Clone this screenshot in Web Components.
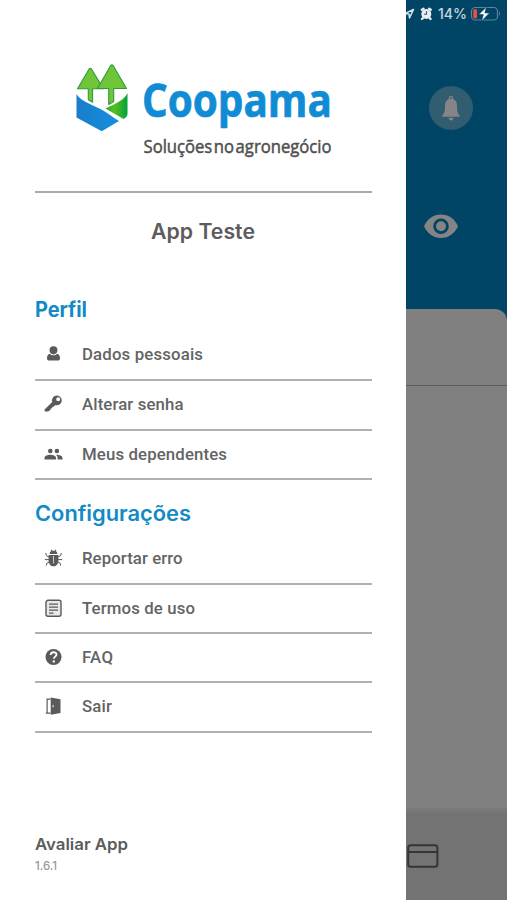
<!DOCTYPE html>
<html lang="pt-BR">
<head>
<meta charset="utf-8">
<title>Coopama</title>
<style>
body{margin:0;width:507px;height:900px;overflow:hidden;background:#fff;font-family:Roboto,"Liberation Sans",sans-serif}
</style>
</head>
<body>
<app-screen></app-screen>
<script>
const define=(name,html)=>{
  const t=document.createElement('template');
  t.innerHTML=html;
  customElements.define(name,class extends HTMLElement{
    constructor(){super();this.attachShadow({mode:'open'}).append(t.content.cloneNode(true));}
  });
};

/* Text set to an exact line length; w = length, size = font size, base = baseline */
customElements.define('fit-text',class extends HTMLElement{
  connectedCallback(){
    if(this.shadowRoot)return;
    const a=n=>this.getAttribute(n);
    const root=this.attachShadow({mode:'open'});
    root.innerHTML=`<style>:host{display:block}svg{display:block;overflow:visible}</style>
    <svg width="${a('w')}" height="${a('box')}"><text x="0" y="${a('base')}" textLength="${a('w')}" lengthAdjust="${a('adjust')||'spacingAndGlyphs'}"
     font-family="${a('face')||'Inter'}, 'Liberation Sans', sans-serif" font-size="${a('size')}" font-weight="${a('weight')||600}" fill="${a('ink')}"></text></svg>`;
    root.querySelector('text').textContent=a('label');
  }
});

const icons={
person:'<path d="M9.500 1.200a4 4 0 0 1 4 4c0 2.300-1.800 4.200-4 4.200s-4-1.900-4-4.200a4 4 0 0 1 4-4zM5.900 8.700c2 2 5.200 2 7.200 0 2 .3 2.900 2 2.900 4.500 0 1.700-.8 2.300-2.200 2.300H5.200C3.800 15.500 3 14.900 3 13.200c0-2.500.9-4.200 2.900-4.500z"/>',
key:'<path fill-rule="evenodd" d="M12.900.500a4.900 4.900 0 1 1-1.400 9.600L9.600 11.800H8.300v1.400H6.800v1.300L4.200 16.600H1.300Q.6 16.600.6 16v-1.600L8.200 6.900A4.900 4.900 0 0 1 12.900.5zm1.300 1.800a2 2 0 1 0 0 4 2 2 0 0 0 0-4z"/>',
people:'<circle cx="6.300" cy="6" r="2.300"/><circle cx="12.900" cy="6" r="2.300"/><path d="M.5 14.500v-1.600c0-2.100 3.400-3.200 5.800-3.200s5.800 1.100 5.800 3.200v1.600zM13.600 14.500v-1.600c0-1.300-.6-2.300-1.600-3.100 2.700-.2 6.500.9 6.500 3.100v1.600z"/>',
bug:'<path d="M4.600 6h9.800v5.500c0 3.500-2.200 5.800-4.900 5.800s-4.900-2.300-4.900-5.800zM5.600 5c0-1.500.8-2.300 1.800-2.900L6.700.9l.8-.5 1 1.300h2l1-1.300.8.5-.7 1.200c1 .6 1.800 1.400 1.800 2.900z"/><path fill="none" stroke="#5a5a5a" stroke-width="1" d="M5 8 2.300 6.600 1.800 4M14 8l2.700-1.400.5-2.600M5 10.600H.8M14 10.600h4.200M5.300 13l-2.500 1.200-.5 2.400M13.700 13l2.500 1.200.5 2.400"/><path fill="#ccc" d="M9 7h1v7.500H9z"/>',
terms:'<rect x="2" y="1.300" width="15" height="16" rx="2" fill="#e8e8e8" stroke="#5a5a5a" stroke-width="1.400"/><path stroke="#5a5a5a" stroke-width="1.200" d="M5 5.200h9M5 8.200h9M5 11.200h9M5 14.200h4.500"/>',
help:'<circle cx="9.500" cy="9" r="8"/><path fill="none" stroke="#fff" stroke-width="1.800" d="M6.700 7.100c0-3.800 5.800-3.600 5.800-.5 0 2-2.700 2-2.700 4.200"/><circle cx="9.800" cy="13.400" r="1.200" fill="#fff"/>',
door:'<path fill="none" stroke="#5a5a5a" stroke-width="1.200" d="M6.500 2.200H3.100v13.900h3.400M1.800 16.100h4"/><path fill-rule="evenodd" d="M6.700.5 16.500 2.200v13.900L6.700 17.800zM8.600 8v2.300h1V8z"/>'
};
customElements.define('menu-row',class extends HTMLElement{
  connectedCallback(){
    if(this.shadowRoot)return;
    this.attachShadow({mode:'open'}).innerHTML=`<style>
    :host{display:flex;align-items:center;box-sizing:border-box;height:${this.getAttribute('h')}px;border-bottom:2px solid #b0b0b0;padding:0 0 2px 9px;gap:19px}
    svg{width:19px;height:18px;flex:none;fill:#5a5a5a}
    </style><svg viewBox="0 0 19 18">${icons[this.getAttribute('icon')]}</svg>
    <fit-text face="Roboto" adjust="spacing" weight="500" size="16.800" box="20" base="16" ink="#646464" w="${this.getAttribute('w')}" label="${this.getAttribute('label')}"></fit-text>`;
  }
});

define('brand-logo',`<style>
:host{display:block;height:190px}
svg{display:block;margin-left:-35px;overflow:visible}
</style>
<svg width="370" height="190" viewBox="0 0 370 190">
<defs>
<linearGradient id="b" x1="0" x2="1"><stop stop-color="#1a7dcb"/><stop offset="1" stop-color="#1490dc"/></linearGradient>
<linearGradient id="g" x1="0" x2="1"><stop stop-color="#25a832"/><stop offset=".4" stop-color="#58be1e"/><stop offset="1" stop-color="#00a33c"/></linearGradient>
</defs>
<path fill="#6fc535" stroke="#2f9a40" stroke-width="1.100" stroke-linejoin="round" d="M89.300 68.700q1-.9 2 0L103.500 88.700H92.600v13.500l-4.300-2.500v-11H77.500z"/>
<path fill="#6fc535" stroke="#2f9a40" stroke-width="1.100" stroke-linejoin="round" d="M110.700 65.500q1.200-1.200 2.400 0L126.500 88.500H113.700v13l-5 3V88.500H97.500z"/>
<path fill="url(#b)" d="M76.500 94c3 6.500 14 9.800 24 15 6.300 3.300 12 8 18.500 12L101.800 131.300 76.500 117.500z"/>
<path fill="url(#g)" d="M127.500 93V114.500q-.3 2.500-4 4.500l-18-10.500c9.500-4.700 18.500-8 22-15.500z"/>
<text x="142" y="117.300" textLength="190" lengthAdjust="spacingAndGlyphs" font-family="Open Sans, sans-serif" font-size="46" font-weight="700" stroke="#118cd4" stroke-width=".7" fill="#118cd4">Coopama</text>
<text x="143.500" y="152.500" textLength="188" lengthAdjust="spacingAndGlyphs" word-spacing="-3" font-family="Open Sans, sans-serif" font-size="18" font-weight="500" stroke="#505050" stroke-width=".5" fill="#505050">Soluções no agronegócio</text>
</svg>`);

define('side-drawer',`<style>
:host{display:block;box-sizing:border-box;width:406px;height:900px;padding:0 34px 0 35px;background:#fff}
.rule{height:2px;margin-top:1px;background:#aaa}
.user{display:flex;justify-content:center;height:106px;box-sizing:border-box;padding-top:27px;padding-right:1px}
.gap{height:23px}
footer{padding-top:98px}
</style>
<brand-logo></brand-logo><div class="rule"></div>
<div class="user"><fit-text w="104" box="26" base="19" size="21" ink="#5c5c5c" label="App Teste"></fit-text></div>
<fit-text w="52" box="31" base="18" size="21" weight="650" ink="#118ac6" label="Perfil"></fit-text>
<menu-row h="51" icon="person" w="121" label="Dados pessoais"></menu-row>
<menu-row h="50" icon="key" w="101.500" label="Alterar senha"></menu-row>
<menu-row h="49" icon="people" w="145" label="Meus dependentes"></menu-row>
<div class="gap"></div>
<fit-text w="156" box="32" base="18" size="21" ink="#118ac6" label="Configurações"></fit-text>
<menu-row h="50" icon="bug" w="100.500" label="Reportar erro"></menu-row>
<menu-row h="49" icon="terms" w="113" label="Termos de uso"></menu-row>
<menu-row h="49" icon="help" w="31" label="FAQ"></menu-row>
<menu-row h="50" icon="door" w="30" label="Sair"></menu-row>
<footer><fit-text w="93" box="28" base="19" size="16.500" ink="#5c5c5c" label="Avaliar App"></fit-text>
<fit-text w="22" box="16" base="11" size="11.500" weight="500" ink="#999" label="1.6.1"></fit-text></footer>`);

define('status-bar',`<style>:host{display:block;height:28px}svg{display:block}</style>
<svg width="101" height="28" viewBox="406 0 101 28">
<path fill="none" stroke="#d8e2e8" stroke-width="1.500" stroke-linejoin="round" d="M405 13.500 413.500 9.500 409.500 18 409 14z"/>
<circle cx="426.300" cy="14" r="5" fill="#e8edf0"/><path stroke="#e8edf0" stroke-width="2.400" stroke-linecap="round" d="m421.800 9.700 1.700-1M430.800 9.700l-1.700-1M423 18l-1 1M429.600 18l1 1"/><path fill="none" stroke="#33627f" stroke-width="1.100" d="M426.500 11v3.300H424"/>
<text x="438" y="19" textLength="29" lengthAdjust="spacingAndGlyphs" font-family="Inter,sans-serif" font-size="14.500" font-weight="500" fill="#c8d5dd">14%</text>
<rect x="471.500" y="7.500" width="26" height="12.500" rx="3.800" fill="none" stroke="#5f8499" stroke-width="1.200"/>
<path fill="#5f8499" d="M499 11.300q2.200 2.300 0 4.700z"/>
<rect x="473.300" y="9.300" width="3.700" height="9" rx="1" fill="#f04c43"/>
<path fill="#fff" stroke="#004566" stroke-width=".6" d="m486.500 7-7.700 7.600h4.600L481.500 21l8-8h-4.700z"/>
</svg>`);

define('dimmed-page',`<style>
:host{display:flex;flex-direction:column;width:101px;height:900px;background:#808080}
.top{height:310px;background:#004566}
.tools{display:flex;flex-direction:column;padding-left:18px}
.bell{width:44px;height:44px;margin:58px 0 0 5px;border-radius:50%;background:#315d70}
.bell svg,.eye{display:block}
.eye{margin-top:84px}
.base{background:#004566}
.sheet{height:76px;margin-top:-1px;background:#808080;border-top-right-radius:12px;border-bottom:1px solid #5c5c5c}
.main{flex:1}
.nav{height:92px;background:linear-gradient(#7b7b7b,#737373 6px)}
.nav svg{display:block;padding-top:34px}
</style>
<div class="top"><status-bar></status-bar>
<div class="tools"><div class="bell"><svg width="44" height="44" viewBox="429 86 44 44"><circle cx="451" cy="98.500" r="1.800" fill="none" stroke="#858585" stroke-width="1.200"/><path fill="#858585" d="M451 98.800c4 0 6 3 6 7.200 0 5 .6 7 3.300 10.700H441.700c2.700-3.700 3.300-5.700 3.300-10.700 0-4.200 2-7.200 6-7.200zM448.500 117.700h5c-.3 3.600-4.700 3.600-5 0z"/></svg></div>
<svg class="eye" width="34" height="25" viewBox="424 214 34 25"><path fill="#848484" d="M424 226.300C427 219 433.500 214.500 441 214.500s14 4.500 17 11.800C455 233.500 448.500 238 441 238s-14-4.500-17-11.700z"/><circle cx="441" cy="226.300" r="6.400" fill="#848484" stroke="#004566" stroke-width="2.800"/></svg></div></div>
<div class="base"><div class="sheet"></div></div>
<div class="main"></div>
<div class="nav"><svg width="36" height="26" viewBox="406 842 36 26"><rect x="408.200" y="845.200" width="29.200" height="21.500" rx="2.500" fill="none" stroke="#353535" stroke-width="2"/><path stroke="#353535" stroke-width="2" d="M408 852h29"/></svg></div>`);

define('app-screen',`<style>:host{display:grid;grid-template-columns:406px 101px;width:507px;height:900px}</style>
<side-drawer></side-drawer><dimmed-page></dimmed-page>`);
</script>
</body>
</html>
